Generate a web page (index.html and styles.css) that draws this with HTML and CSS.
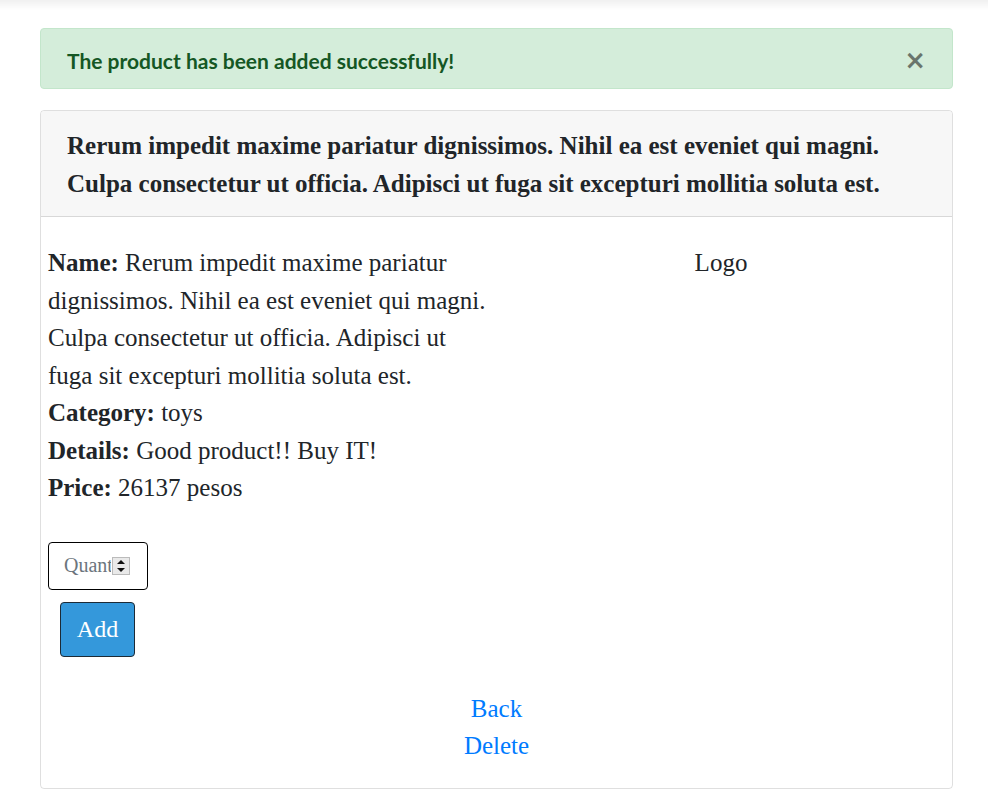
FILE: index.html
```html
<!DOCTYPE html>
<html>
<head>
<meta charset="utf-8">
<link rel="stylesheet" href="styles.css">
</head>
<body>
<div class="topshade"></div>
<main class="page">
  <div class="alert">
    <span class="alert-text">The product has been added successfully!</span>
    <span class="alert-close">&times;</span>
  </div>
  <section class="card">
    <header class="card-header">Rerum impedit maxime pariatur dignissimos. Nihil ea est eveniet qui magni. Culpa consectetur ut officia. Adipisci ut fuga sit excepturi mollitia soluta est.</header>
    <div class="card-body">
      <div class="row">
        <div class="info">
          <div><b>Name:</b> Rerum impedit maxime pariatur dignissimos. Nihil ea est eveniet qui magni. Culpa consectetur ut officia. Adipisci ut fuga sit excepturi mollitia soluta est.</div>
          <div><b>Category:</b> toys</div>
          <div><b>Details:</b> Good product!! Buy IT!</div>
          <div><b>Price:</b> 26137 pesos</div>
          <form class="buy">
            <div class="qty-wrap">
              <input class="qty" type="number" placeholder="Quantity">
              <span class="spin" aria-hidden="true"><i class="up"></i><i class="down"></i></span>
            </div>
            <button class="add" type="button">Add</button>
          </form>
        </div>
        <div class="logo">Logo</div>
      </div>
      <nav class="links">
        <a href="#">Back</a>
        <a href="#">Delete</a>
      </nav>
    </div>
  </section>
</main>
</body>
</html>
```
FILE: styles.css
```css
html, body {
  margin: 0;
  padding: 0;
  background: #fff;
}
body {
  font-family: "Liberation Serif", "Times New Roman", serif;
  font-size: 25px;
  line-height: 1.5;
  color: #212529;
}
.topshade {
  height: 10px;
  background: linear-gradient(to bottom, rgba(0,0,0,0.06), rgba(0,0,0,0));
}
.page {
  padding: 18px 35px 0 40px;
}
.alert {
  display: flex;
  justify-content: space-between;
  align-items: center;
  height: 59px;
  padding: 0 26px 0 26px;
  background: #d4edda;
  border: 1px solid #c3e6cb;
  border-radius: 4px;
  color: #155724;
  font-family: "Lato", sans-serif;
  font-weight: 700;
  font-size: 21px;
  line-height: 1.2;
}
.alert-text {
  padding-top: 4px;
}
.alert-close {
  font-family: "DejaVu Sans", sans-serif;
  font-size: 26px;
  font-weight: 700;
  color: #000;
  opacity: 0.5;
  line-height: 1;
  padding-top: 3px;
}
.card {
  margin-top: 21px;
  border: 1px solid rgba(0,0,0,0.125);
  border-radius: 4px;
}
.card-header {
  background: #f7f7f7;
  border-bottom: 1px solid rgba(0,0,0,0.125);
  padding: 16px 26px 14px;
  font-weight: 700;
  line-height: 37.5px;
  border-radius: 4px 4px 0 0;
}
.card-body {
  padding: 27px 0 23px;
}
.row {
  display: grid;
  grid-template-columns: 449px 1fr;
}
.info {
  padding-left: 7px;
}
.logo {
  text-align: center;
}
.buy {
  margin-top: 35px;
  display: flex;
  flex-direction: column;
  align-items: flex-start;
  gap: 12px;
}
.qty-wrap {
  position: relative;
}
.qty {
  box-sizing: border-box;
  width: 100px;
  height: 48px;
  padding: 0 36px 0 15px;
  border: 1px solid #000;
  border-radius: 4px;
  font-family: "Liberation Serif", serif;
  font-size: 20px;
  -moz-appearance: textfield;
}
.qty::-webkit-inner-spin-button,
.qty::-webkit-outer-spin-button {
  -webkit-appearance: none;
  margin: 0;
}
.qty::placeholder {
  color: #6c757d;
}
.spin {
  position: absolute;
  left: 64px;
  top: 15px;
  width: 18px;
  height: 18px;
  box-sizing: border-box;
  border: 1px solid #bbb;
  background: #e9e9e9;
  display: flex;
  flex-direction: column;
  align-items: center;
  justify-content: space-around;
}
.spin i {
  width: 0;
  height: 0;
  border-left: 4px solid transparent;
  border-right: 4px solid transparent;
}
.spin .up {
  border-bottom: 4px solid #111;
}
.spin .down {
  border-top: 4px solid #111;
}
.add {
  margin-left: 12px;
  box-sizing: border-box;
  width: 75px;
  height: 55px;
  background: #3498db;
  color: #fff;
  border: 1px solid #1c2a36;
  border-radius: 4px;
  font-family: "Liberation Serif", serif;
  font-size: 24px;
}
.links {
  margin-top: 33px;
  display: flex;
  flex-direction: column;
  align-items: center;
}
.links a {
  color: #007bff;
  text-decoration: none;
}
```
